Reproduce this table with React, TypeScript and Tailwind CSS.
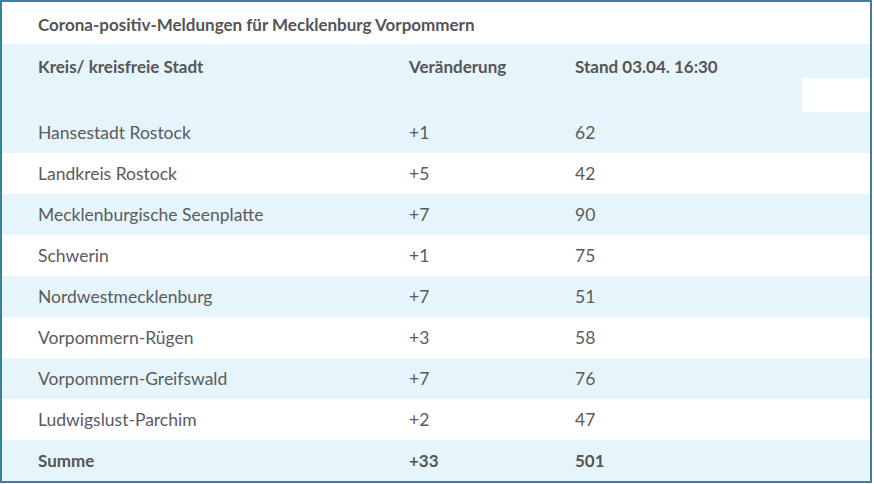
const rows: [string, string, string][] = [
  ['Hansestadt Rostock', '+1', '62'],
  ['Landkreis Rostock', '+5', '42'],
  ['Mecklenburgische Seenplatte', '+7', '90'],
  ['Schwerin', '+1', '75'],
  ['Nordwestmecklenburg', '+7', '51'],
  ['Vorpommern-Rügen', '+3', '58'],
  ['Vorpommern-Greifswald', '+7', '76'],
  ['Ludwigslust-Parchim', '+2', '47'],
];

export default function App() {
  return (
    <div className="w-[874px] h-[484px] bg-white font-['Lato',sans-serif] text-[17.5px] text-[#5b5b5b]">
      <div className="w-[872px] h-[483px] border-2 border-[#3e7f9c] flex flex-col">
        <div className="h-[42px] flex items-center pt-[3px] pl-[36px] font-bold text-[17px] text-[#555]">
          Corona-positiv-Meldungen für Mecklenburg Vorpommern
        </div>
        <div className="bg-[#e6f5fc]">
          <div className="h-[34px] grid grid-cols-[371px_166px_1fr] items-start pt-[10px] pl-[36px] font-bold text-[17px] text-[#555]">
            <div>Kreis/ kreisfreie Stadt</div>
            <div>Veränderung</div>
            <div>Stand 03.04. 16:30</div>
          </div>
          <div className="h-[34px] flex justify-end">
            <div className="w-[68px] bg-white" />
          </div>
        </div>
        {rows.map(([name, delta, total], i) => (
          <div
            key={name}
            className={`h-[41px] grid grid-cols-[371px_166px_1fr] items-center pt-[2px] pl-[36px] ${i % 2 === 0 ? 'bg-[#e6f5fc]' : 'bg-white'}`}
          >
            <div>{name}</div>
            <div>{delta}</div>
            <div>{total}</div>
          </div>
        ))}
        <div className="flex-1 grid grid-cols-[371px_166px_1fr] items-center pl-[36px] bg-[#e6f5fc] font-bold text-[17px] text-[#555]">
          <div>Summe</div>
          <div>+33</div>
          <div>501</div>
        </div>
      </div>
    </div>
  );
}
